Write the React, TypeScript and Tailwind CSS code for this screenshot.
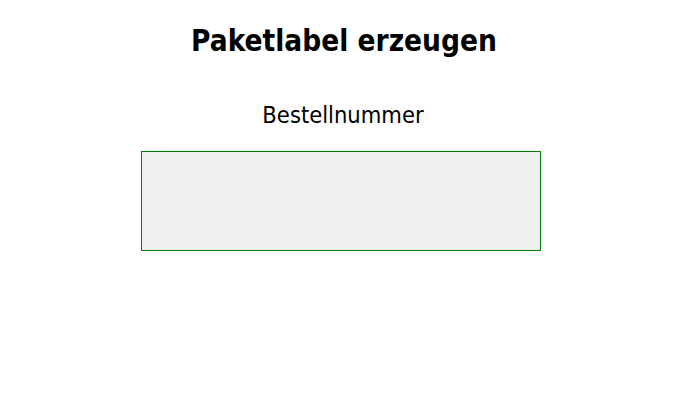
export default function App() {
  return (
    <div
      className="w-[677px] h-[410px] bg-white flex flex-col items-center pl-[5px] text-black"
      style={{ fontFamily: '"DejaVu Sans Condensed", "DejaVu Sans", sans-serif' }}
    >
      <h1 className="mt-[21px] ml-[6px] text-[29.5px] leading-[40px] font-bold">Paketlabel erzeugen</h1>
      <label className="mt-[39px] ml-[4px] text-[23.5px] leading-[30px]">Bestellnummer</label>
      <input
        type="text"
        className="mt-[21px] w-[400px] h-[100px] bg-[#efefef] border border-[#008000] outline-none"
      />
    </div>
  );
}
